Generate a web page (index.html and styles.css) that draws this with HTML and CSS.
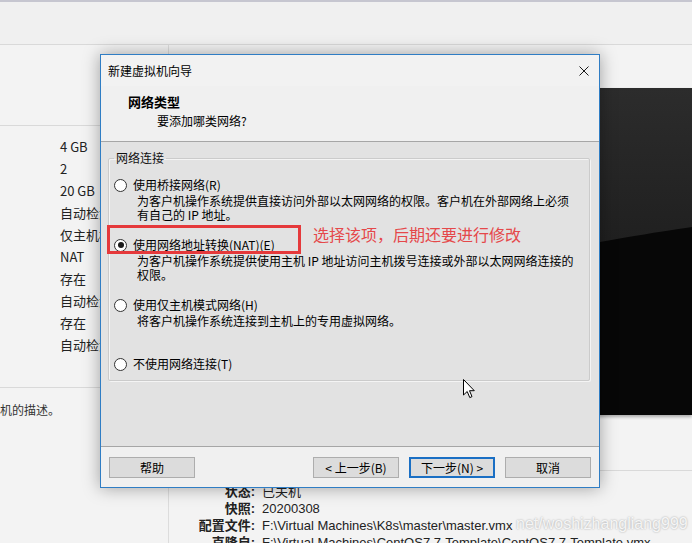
FILE: index.html
```html
<!DOCTYPE html>
<html lang="zh-CN">
<head>
    <meta charset="UTF-8">
    <meta name="viewport" content="width=device-width, initial-scale=1.0">
    <title>新建虚拟机向导</title>
    <link rel="stylesheet" href="styles.css">
</head>
<body>
    <div class="screen">
        <div class="topbar"></div>
        <div class="main">
            <div class="sidebar">
                <div class="specs">
                    <div class="spec">4 GB</div>
                    <div class="spec">2</div>
                    <div class="spec">20 GB</div>
                    <div class="spec">自动检测</div>
                    <div class="spec">仅主机模式</div>
                    <div class="spec">NAT</div>
                    <div class="spec">存在</div>
                    <div class="spec">自动检测</div>
                    <div class="spec">存在</div>
                    <div class="spec">自动检测</div>
                </div>
                <div class="vm-desc">机的描述。</div>
            </div>
            <div class="pane">
                <div class="preview">
                    <svg viewBox="0 0 423 327" preserveAspectRatio="none">
                        <defs>
                            <linearGradient id="glare" x1="0" y1="0" x2="0" y2="1">
                                <stop offset="0" stop-color="#2c2c2c"/>
                                <stop offset="1" stop-color="#1b1b1b"/>
                            </linearGradient>
                        </defs>
                        <rect width="423" height="327" fill="#070707"/>
                        <path d="M0 0 H423 V139 Q330 152 0 215 Z" fill="url(#glare)"/>
                    </svg>
                </div>
                <div class="details">
                    <span class="key">状态:</span><span>已关机</span>
                    <span class="key">快照:</span><span>20200308</span>
                    <span class="key">配置文件:</span><span>F:\Virtual Machines\K8s\master\master.vmx</span>
                    <span class="key">克隆自:</span><span>F:\Virtual Machines\CentOS7.7-Template\CentOS7.7-Template.vmx</span>
                </div>
            </div>
        </div>

        <div class="watermark">net/woshizhangliang999</div>

        <div class="dialog">
            <div class="titlebar">
                <span>新建虚拟机向导</span>
                <svg class="close" viewBox="0 0 10 10" width="10" height="10">
                    <path d="M0.5 0.5 L9.5 9.5 M9.5 0.5 L0.5 9.5" stroke="#1a1a1a" stroke-width="1" fill="none"/>
                </svg>
            </div>
            <div class="wiz-head">
                <div class="wiz-title">网络类型</div>
                <div class="wiz-sub">要添加哪类网络?</div>
            </div>
            <div class="wiz-body">
                <fieldset>
                    <legend>网络连接</legend>
                    <div class="option">
                        <div class="option-row"><span class="radio"></span>使用桥接网络(R)</div>
                        <div class="option-desc">为客户机操作系统提供直接访问外部以太网网络的权限。客户机在外部网络上必须<br>有自己的 IP 地址。</div>
                    </div>
                    <div class="option marked">
                        <div class="option-row"><span class="radio checked"></span>使用网络地址转换(NAT)(E)</div>
                        <div class="option-desc">为客户机操作系统提供使用主机 IP 地址访问主机拨号连接或外部以太网网络连接的<br>权限。</div>
                        <div class="mark-box"></div>
                        <div class="mark-note">选择该项，后期还要进行修改</div>
                    </div>
                    <div class="option">
                        <div class="option-row"><span class="radio"></span>使用仅主机模式网络(H)</div>
                        <div class="option-desc">将客户机操作系统连接到主机上的专用虚拟网络。</div>
                    </div>
                    <div class="option last">
                        <div class="option-row"><span class="radio"></span>不使用网络连接(T)</div>
                    </div>
                </fieldset>
            </div>
            <div class="wiz-foot">
                <button class="btn">帮助</button>
                <div class="btn-group">
                    <button class="btn">&lt; 上一步(B)</button>
                    <button class="btn primary">下一步(N) &gt;</button>
                    <button class="btn">取消</button>
                </div>
            </div>
        </div>

        <svg class="cursor" viewBox="0 0 12 20" width="12" height="20">
            <path d="M0.5 0.5 V16 L4.2 12.5 L6.8 18.6 L9 17.6 L6.5 11.7 L11.3 11.7 Z" fill="#fff" stroke="#000" stroke-width="1" stroke-linejoin="round"/>
        </svg>
    </div>
</body>
</html>
```
FILE: styles.css
```css
* {
    box-sizing: border-box;
}

body {
    margin: 0;
    font-family: "Noto Sans CJK SC", "Noto Sans", sans-serif;
    color: #000;
}

.screen {
    position: relative;
    width: 692px;
    height: 543px;
    overflow: hidden;
    background: #f0f0f0;
}

.topbar {
    height: 45px;
    border-top: 2px solid #c6c6d0;
    border-bottom: 1px solid #d9d9d9;
}

.main {
    display: flex;
    height: 498px;
}

.sidebar {
    width: 169px;
    border-right: 1px solid #dcdcdc;
    padding-top: 80px;
    background: #f3f3f3;
}

.specs {
    border-top: 1px solid #d9d9d9;
    border-bottom: 1px solid #d9d9d9;
    padding: 10px 0 31px 60px;
    font-size: 13px;
    color: #222;
}

.spec {
    height: 22px;
    line-height: 22px;
    white-space: nowrap;
}

.vm-desc {
    margin-top: 14px;
    font-size: 12px;
    line-height: 16px;
    color: #333;
}

.pane {
    flex: 1;
    display: flex;
    flex-direction: column;
    background: #f3f3f3;
}

.preview {
    margin: 43px 0 0 100px;
    height: 327px;
    box-shadow: 0 2px 3px rgba(0, 0, 0, 0.3);
}

.preview svg {
    display: block;
    width: 100%;
    height: 100%;
}

.details {
    margin-top: 55px;
    border-top: 1px solid #d9d9d9;
    padding-top: 12px;
    display: grid;
    grid-template-columns: 86px auto;
    column-gap: 7px;
    font-family: "Liberation Sans", "Noto Sans CJK SC", sans-serif;
    font-size: 13px;
    line-height: 17px;
    color: #222;
    white-space: nowrap;
}

.details .key {
    text-align: right;
    font-weight: bold;
}

.watermark {
    position: absolute;
    left: 516px;
    top: 514px;
    font-family: "Liberation Sans", sans-serif;
    font-size: 16px;
    line-height: 20px;
    color: rgba(255, 255, 255, 0.85);
    text-shadow: 0 0 2px rgba(0, 0, 0, 0.35);
}

/* wizard window */
.dialog {
    position: absolute;
    left: 100px;
    top: 54px;
    width: 500px;
    height: 434px;
    border: 1px solid #2f7dc4;
    background: #f0f0f0;
    box-shadow: 0 0 16px rgba(0, 0, 0, 0.35);
    display: flex;
    flex-direction: column;
    font-size: 12px;
}

.titlebar {
    height: 31px;
    padding: 0 10px 0 7px;
    display: flex;
    align-items: center;
    justify-content: space-between;
    background: #f2f2f2;
    line-height: 16px;
}

.wiz-head {
    padding: 6px 0 11px 0;
    border-bottom: 1px solid #a6a6a6;
    line-height: 19px;
}

.wiz-title {
    padding-left: 27px;
    font-weight: bold;
    font-size: 13px;
}

.wiz-sub {
    padding-left: 56px;
}

.wiz-body {
    flex: 1;
    background: #e2e2e2;
    padding: 8px 9px 0 7px;
}

fieldset {
    margin: 0;
    padding: 0 0 10px 5px;
    height: 231px;
    border: 1px solid #cbcbcb;
    box-shadow: inset 1px 1px 0 #f4f4f4, 1px 1px 0 #f4f4f4;
    border-radius: 2px;
}

legend {
    margin-left: 0;
    padding: 0 2px;
    line-height: 16px;
    color: #111;
}

.option {
    margin-top: 15px;
}

.option:first-of-type {
    margin-top: 11px;
}

.option.last {
    margin-top: 28px;
}

.option.marked {
    position: relative;
}

.option-row {
    display: flex;
    align-items: center;
    gap: 6px;
    height: 16px;
    line-height: 16px;
}

.radio {
    width: 13px;
    height: 13px;
    border: 1px solid #333;
    border-radius: 50%;
    background: #fff;
    display: flex;
    align-items: center;
    justify-content: center;
}

.radio.checked::after {
    content: "";
    width: 6px;
    height: 6px;
    border-radius: 50%;
    background: #1a1a1a;
}

.option-desc {
    margin: 1px 0 0 23px;
    line-height: 14px;
    white-space: nowrap;
}

/* red annotation drawn over the screenshot */
.mark-box {
    position: absolute;
    left: -7px;
    top: -12px;
    width: 194px;
    height: 29px;
    border: 3px solid #e5393b;
}

.mark-note {
    position: absolute;
    left: 199px;
    top: -12px;
    font-size: 16px;
    line-height: 18px;
    color: #e5484a;
    white-space: nowrap;
}

.wiz-foot {
    height: 41px;
    border-top: 1px solid #a6a6a6;
    padding: 10px 8px 0 8px;
    display: flex;
    justify-content: space-between;
    align-items: flex-start;
}

.btn-group {
    display: flex;
    gap: 10px;
}

.btn {
    width: 86px;
    height: 21px;
    margin: 0;
    padding: 0;
    border: 1px solid #adadad;
    background: #dcdcdc;
    font-family: "Noto Sans CJK SC", "Noto Sans", sans-serif;
    font-size: 12px;
    line-height: 17px;
    color: #000;
}

.btn.primary {
    border: 2px solid #1a6fc4;
}

.cursor {
    position: absolute;
    left: 463px;
    top: 379px;
}
```
